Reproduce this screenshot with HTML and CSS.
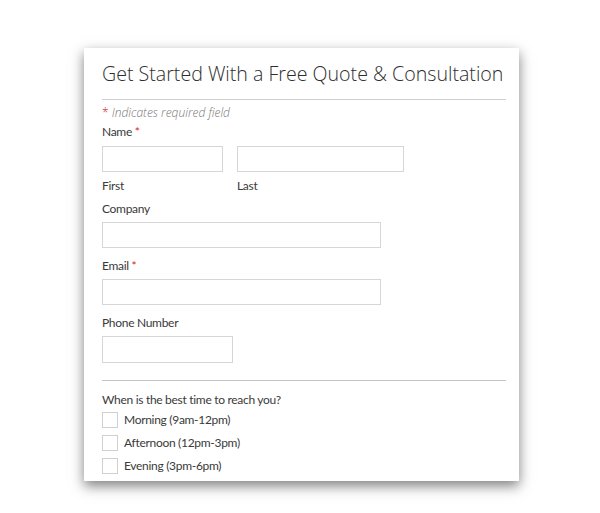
FILE: index.html
```html
<!DOCTYPE html>
<html>
<head>
<meta charset="utf-8">
<link rel="stylesheet" href="styles.css">
</head>
<body>
<div class="card">
  <h1 class="title">Get Started With a Free Quote &amp; Consultation</h1>
  <div class="rule"></div>
  <p class="req"><span class="star">*</span> Indicates required field</p>
  <div class="label name-label">Name <span class="star">*</span></div>
  <div class="name-row">
    <div class="sub">
      <div class="input first"></div>
      <div class="sublabel">First</div>
    </div>
    <div class="sub">
      <div class="input last"></div>
      <div class="sublabel">Last</div>
    </div>
  </div>
  <div class="label">Company</div>
  <div class="input wide"></div>
  <div class="label spaced">Email <span class="star">*</span></div>
  <div class="input wide"></div>
  <div class="label spaced">Phone Number</div>
  <div class="input phone"></div>
  <div class="rule rule2"></div>
  <div class="label q">When is the best time to reach you?</div>
  <div class="checks">
    <div class="check"><span class="box"></span>Morning (9am-12pm)</div>
    <div class="check"><span class="box"></span>Afternoon (12pm-3pm)</div>
    <div class="check"><span class="box"></span>Evening (3pm-6pm)</div>
  </div>
</div>
</body>
</html>
```
FILE: styles.css
```css
html, body {
  margin: 0;
  padding: 0;
  background: #fff;
}
body {
  min-height: 513px;
  box-sizing: border-box;
  padding: 48px 0 0 84px;
  font-family: Lato, "Noto Sans", sans-serif;
  color: #333;
}
.card {
  width: 435px;
  height: 433px;
  box-sizing: border-box;
  background: #fff;
  box-shadow: 0 5px 12px rgba(0,0,0,0.5);
  padding: 13px 13px 0 18px;
  overflow: hidden;
}
.title {
  margin: 0;
  font-family: "Open Sans", sans-serif;
  font-weight: 300;
  font-size: 19.6px;
  line-height: 26px;
  color: #2e2e2e;
  white-space: nowrap;
}
.rule {
  height: 1px;
  background: #cfcfcf;
  margin-top: 12px;
}
.req {
  margin: 4px 0 0 0;
  font-style: italic;
  font-size: 12px;
  line-height: 18px;
  color: #777;
  font-family: "Open Sans", sans-serif;
  font-weight: 300;
}
.star {
  color: #d0261c;
  font-style: normal;
}
.label {
  font-size: 12px;
  letter-spacing: -0.3px;
  line-height: 18px;
  color: #3a3a3a;
  margin-top: 5px;
}
.name-label { margin-top: 1px; }
.spaced { margin-top: 9px; }
.name-row {
  display: flex;
  gap: 14px;
  margin-top: 5px;
}
.sublabel {
  font-size: 12px;
  letter-spacing: -0.3px;
  line-height: 18px;
  margin-top: 5px;
  color: #3a3a3a;
}
.input {
  height: 26px;
  box-sizing: border-box;
  border: 1px solid #d6d6d6;
  background: #fff;
}
.first { width: 121px; }
.last { width: 167px; }
.wide { width: 279px; margin-top: 4px; }
.phone { width: 131px; height: 27px; margin-top: 4px; }
.rule2 {
  margin-top: 17px;
  background: #c4c4c4;
}
.q { margin-top: 10px; }
.checks {
  display: flex;
  flex-direction: column;
  gap: 7px;
  margin-top: 3px;
}
.check {
  display: flex;
  align-items: center;
  font-size: 12px;
  letter-spacing: -0.3px;
  line-height: 16px;
  color: #3a3a3a;
}
.box {
  width: 16px;
  height: 16px;
  box-sizing: border-box;
  border: 1px solid #d0d0d0;
  margin-right: 6px;
}
```
